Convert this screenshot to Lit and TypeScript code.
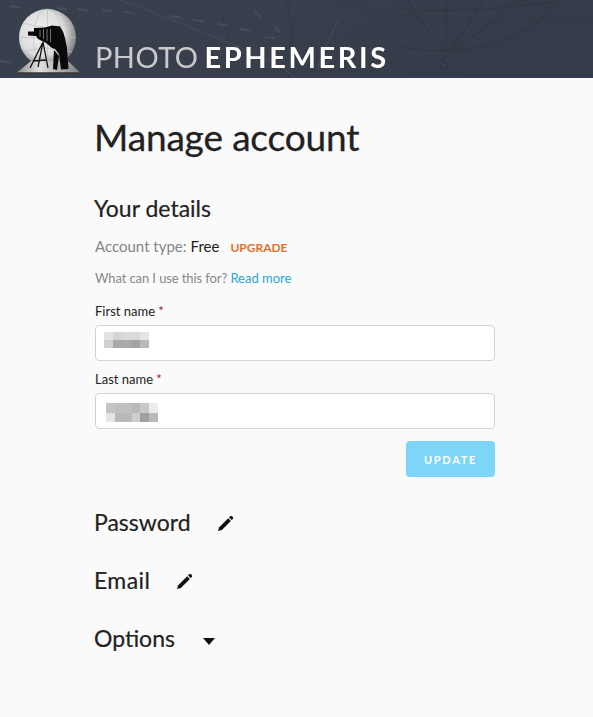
import { LitElement, html, css, svg } from "lit";
import { customElement } from "lit/decorators.js";

const firstMosaic = [
  ["#e2e2e2", "#d5d5d5", "#dadada", "#dadada", "#e5e5e5"],
  ["#d0d0d0", "#a9a9a9", "#a9a9a9", "#a4a4a4", "#b9b9b9"],
];
const lastMosaic = [
  ["#c4c4c4", "#c1c1c1", "#c0c0c0", "#b9b9b9", "#c8c8c8", "#ececec"],
  ["#e4e4e4", "#b9b9b9", "#b9b9b9", "#cdcdcd", "#a0a0a0", "#b9b9b9"],
];

const pencil = svg`<svg class="pencil" viewBox="0 0 16 16" width="16" height="16" aria-hidden="true">
  <path d="M0 16 L1.2 12.2 L10.2 3.2 L12.9 5.9 L3.9 14.9 Z" fill="#111"/>
  <path d="M11 2.4 L12.2 1.2 Q13.1 0.5 13.9 1.2 L14.9 2.2 Q15.6 3 14.9 3.9 L13.7 5.1 Z" fill="#111"/>
</svg>`;

@customElement("app-root")
export class AppRoot extends LitElement {
  static styles = css`
    :host {
      display: block;
      min-height: 717px;
      background: #fafafa;
      font-family: Lato, "Open Sans", sans-serif;
      color: #222;
    }
    .header {
      position: relative;
      height: 78px;
      overflow: hidden;
      background: #353c49;
      display: flex;
      align-items: flex-end;
    }
    .art { position: absolute; inset: 0; }
    .logo { position: relative; margin-left: 16px; margin-bottom: 4px; flex: none; }
    .brand {
      position: relative;
      margin-left: 13px;
      margin-bottom: 4px;
      font-size: 29px;
      line-height: 34px;
      white-space: nowrap;
      color: #c9cacc;
      letter-spacing: 0.45px;
    }
    .brand b { color: #fff; font-weight: 700; letter-spacing: 2.6px; margin-left: -2px; }
    .main { width: 400px; margin-left: 95px; display: flex; flex-direction: column; }
    h1 { margin: 37px 0 0 -1px; font-size: 37px; line-height: 44px; font-weight: 400; color: #222; letter-spacing: -0.15px; -webkit-text-stroke: 0.3px #222; }
    h2 { margin: 0 0 0 -1px; font-size: 23px; line-height: 30px; font-weight: 400; color: #222; -webkit-text-stroke: 0.2px #222; }
    .details { margin-top: 34px; }
    .acct { margin-top: 12px; display: flex; align-items: baseline; font-size: 15px; line-height: 22px; color: #858585; }
    .acct .free { color: #222; margin-left: 4px; }
    .upgrade { margin-left: 11px; font-size: 12px; font-weight: 700; letter-spacing: 0; color: #e0722e; }
    .use { margin-top: 9px; font-size: 13px; line-height: 20px; color: #888; letter-spacing: -0.1px; }
    .use a { color: #2ba6cf; text-decoration: none; letter-spacing: 0; }
    .field { display: flex; flex-direction: column; }
    .f1 { margin-top: 13px; }
    .f2 { margin-top: 8px; }
    label { font-size: 13px; line-height: 20px; color: #222; }
    label i { color: #9c1c2c; font-style: normal; }
    .input {
      margin-top: 4px;
      height: 36px;
      box-sizing: border-box;
      background: #fff;
      border: 1px solid #d3d3d3;
      border-radius: 4px;
      display: flex;
      align-items: flex-start;
    }
    .mosaic { display: grid; }
    .m1 { margin-left: 8px; margin-top: 6px; grid-template-columns: repeat(5, 9px); grid-auto-rows: 8px; }
    .m2 { margin-left: 10px; margin-top: 9px; grid-template-columns: repeat(6, 8.6px); grid-auto-rows: 9.5px; }
    .actions { margin-top: 12px; display: flex; justify-content: flex-end; }
    .btn {
      width: 89px;
      height: 36px;
      border: 0;
      border-radius: 4px;
      background: #7dd6f7;
      color: #fff;
      font: 700 11px Lato, sans-serif;
      letter-spacing: 1.7px;
      padding: 0;
    }
    .sec { display: flex; align-items: center; height: 30px; }
    .s1 { margin-top: 30px; }
    .s2 { margin-top: 28px; }
    .sec .pencil { margin-left: 27px; margin-top: 2px; }
    .sec.email h2 { letter-spacing: 0.4px; }
    .caret { margin-left: 28px; width: 0; height: 0; border-left: 6px solid transparent; border-right: 6px solid transparent; border-top: 7px solid #111; margin-top: 6px; }
  `;

  private mosaic(rows: string[][], cls: string) {
    return html`<div class="mosaic ${cls}" aria-hidden="true">
      ${rows.flat().map((c) => html`<span style="background:${c}"></span>`)}
    </div>`;
  }

  render() {
    return html`
      <div class="header">
        <svg class="art" viewBox="0 0 593 78" width="593" height="78" preserveAspectRatio="none" aria-hidden="true">
          <defs>
            <linearGradient id="bg" x1="0" x2="1" y1="0" y2="0.2">
              <stop offset="0" stop-color="#39404d"/>
              <stop offset="0.5" stop-color="#383e4b"/>
              <stop offset="1" stop-color="#353c49"/>
            </linearGradient>
          </defs>
          <rect width="593" height="78" fill="url(#bg)"/>
          <g fill="none" stroke="#2f3541" stroke-width="1.1" opacity="0.75">
            <path d="M400 9 Q470 14 560 1"/>
            <path d="M408 0 Q425 30 446 52"/>
            <path d="M446 0 V52"/>
            <path d="M482 0 Q470 28 446 52"/>
            <path d="M515 0 Q490 30 446 52"/>
            <path d="M400 47 Q445 56 500 43 Q535 28 560 2"/>
            <path d="M287 0 Q296 40 290 78" stroke-width="1.6" opacity="0.5"/>
            <path d="M215 0 Q240 50 225 78" stroke-width="1.4" opacity="0.3"/>
            <path d="M330 0 Q440 30 593 18" opacity="0.35"/>
          </g>
          <g fill="none" stroke="#434a57" stroke-width="1.2">
            <path d="M120 0 Q200 30 270 60 Q285 68 295 78"/>
            <path d="M230 78 Q265 45 300 0" opacity="0.4"/>
            <path d="M338 20 Q325 48 318 66 M318 66 Q326 66 332 58" stroke-width="1.4"/>
          </g>
          <g fill="#464d5a">
            ${[[10,5],[57,7],[78,8],[102,9],[124,11],[170,15],[193,19],[217,23],[240,28],[265,36],[0,60]].map(
              ([x, y]) => svg`<rect x=${x} y=${y} width="11" height="2" transform="rotate(8 ${x} ${y})"/>`
            )}
            <rect x="255" y="9" width="10" height="2" transform="rotate(50 255 9)"/>
            <rect x="275" y="25" width="10" height="2" transform="rotate(50 275 25)"/>
          </g>
          <text x="440" y="69" font-family="Liberation Serif, serif" font-style="italic" font-size="18" fill="#2e3440">S</text>
        </svg>
        <svg class="logo" width="66" height="66" viewBox="16 8 66 66" aria-hidden="true">
          <defs>
            <radialGradient id="globe" cx="0.4" cy="0.42" r="0.66">
              <stop offset="0" stop-color="#f4f4f4"/>
              <stop offset="0.6" stop-color="#dcdcdc"/>
              <stop offset="1" stop-color="#6f6f6f"/>
            </radialGradient>
            <linearGradient id="base" x1="0" x2="1">
              <stop offset="0" stop-color="#8a8a8a"/>
              <stop offset="0.35" stop-color="#e2e2e2"/>
              <stop offset="1" stop-color="#7e7e7e"/>
            </linearGradient>
          </defs>
          <circle cx="47.5" cy="37.5" r="28.5" fill="url(#globe)"/>
          <g fill="none" stroke="#bcbcbc" stroke-width="0.6">
            <ellipse cx="47.5" cy="37.5" rx="14" ry="28.5"/>
            <path d="M47.5 9 V66 M19 37.5 H76 M23 23 Q47.5 31 72 23 M23 52 Q47.5 44 72 52"/>
          </g>
          <path d="M17 72.5 L31 61 H68 L80 72.5 Z" fill="url(#base)"/>
          <path d="M17 72.5 H80 V73.5 H17 Z" fill="#333"/>
          <path d="M43 42 L30 68 M43 42 L38 67 M43 42 L48 68 M33 61 L46 60" stroke="#111" stroke-width="1.3" fill="none"/>
          <path d="M34 28 L45 27.5 L52 25.5 L60 26.5 Q64 32 65 38 L67 48 L68.5 69 L61 69.5 L59 54 L55 49 L52 48 L46 43 L38 39 L36 36 L28 35.5 L28 31.5 L34 31.5 Z" fill="#090909"/>
          <path d="M54 50 L53 69 L57 70 L59 56 Z" fill="#090909"/>
          <path d="M40 30 L40 37 M43.5 29 L43.5 39 M47 29 L47 41 M50.5 29 L50.5 42" stroke="#8d8d8d" stroke-width="0.8"/>
        </svg>
        <div class="brand">PHOTO <b>EPHEMERIS</b></div>
      </div>
      <div class="main">
        <h1>Manage account</h1>
        <h2 class="details">Your details</h2>
        <div class="acct">Account type: <span class="free">Free</span><span class="upgrade">UPGRADE</span></div>
        <div class="use">What can I use this for? <a href="#">Read more</a></div>
        <div class="field f1">
          <label>First name <i>*</i></label>
          <div class="input">${this.mosaic(firstMosaic, "m1")}</div>
        </div>
        <div class="field f2">
          <label>Last name <i>*</i></label>
          <div class="input">${this.mosaic(lastMosaic, "m2")}</div>
        </div>
        <div class="actions"><button class="btn">UPDATE</button></div>
        <div class="sec s1"><h2>Password</h2>${pencil}</div>
        <div class="sec s2 email"><h2>Email</h2>${pencil}</div>
        <div class="sec s2"><h2>Options</h2><span class="caret"></span></div>
      </div>
    `;
  }
}
